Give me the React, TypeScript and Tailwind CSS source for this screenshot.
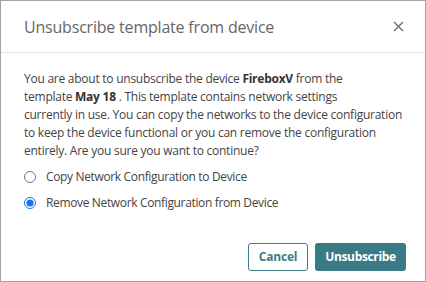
import React from "react";

export default function App() {
  const font = { fontFamily: '"Open Sans", "Noto Sans", sans-serif' };
  return (
    <div
      className="w-[426px] h-[282px] bg-white border border-[#a3a3a3] flex flex-col"
      style={font}
    >
      <div className="h-[52px] flex items-center justify-between pl-[23px] pr-[20px] border-b border-[#e4e4e4] shrink-0">
        <div className="text-[16px] leading-[24px] text-[#666666] tracking-[-0.2px]">
          Unsubscribe template from device
        </div>
        <button className="w-[12px] h-[12px] flex items-center justify-center mr-[1px]">
          <svg width="11" height="11" viewBox="0 0 11 11">
            <path d="M1 1 L10 10 M10 1 L1 10" stroke="#6b6b6b" strokeWidth="1.4" />
          </svg>
        </button>
      </div>
      <div className="pt-[17px] pl-[23px] pr-[22px]">
        <p className="text-[12px] leading-[18px] text-[#444444] tracking-[-0.25px]">
          You are about to unsubscribe the device <b className="font-bold text-[#333]">FireboxV</b> from the
          <br />
          template <b className="font-bold text-[#333]">May 18 </b>. This template contains network settings
          <br />
          currently in use. You can copy the networks to the device configuration to keep the device
          functional or you can remove the configuration entirely. Are you sure you want to continue?
        </p>
        <div className="mt-[4px] flex flex-col">
          <label className="h-[26px] flex items-center text-[12px] text-[#444444] tracking-[-0.35px]">
            <input type="radio" name="opt" className="m-0 w-[12px] h-[12px]" />
            <span className="ml-[10px]">Copy Network Configuration to Device</span>
          </label>
          <label className="h-[26px] flex items-center text-[12px] text-[#444444] tracking-[-0.35px]">
            <input type="radio" name="opt" defaultChecked className="m-0 w-[12px] h-[12px] accent-[#1a73e8]" />
            <span className="ml-[10px]">Remove Network Configuration from Device</span>
          </label>
        </div>
      </div>
      <div className="mt-auto flex justify-end gap-[7px] pr-[19px] pb-[10px]">
        <button className="w-[60px] h-[28px] rounded-[3px] border border-[#3b7c86] text-[#3b7c86] text-[12px] font-bold bg-white tracking-[-0.2px]">
          Cancel
        </button>
        <button className="w-[91px] h-[28px] rounded-[3px] bg-[#3a7a84] text-white text-[12px] font-bold tracking-[-0.35px]">
          Unsubscribe
        </button>
      </div>
    </div>
  );
}
